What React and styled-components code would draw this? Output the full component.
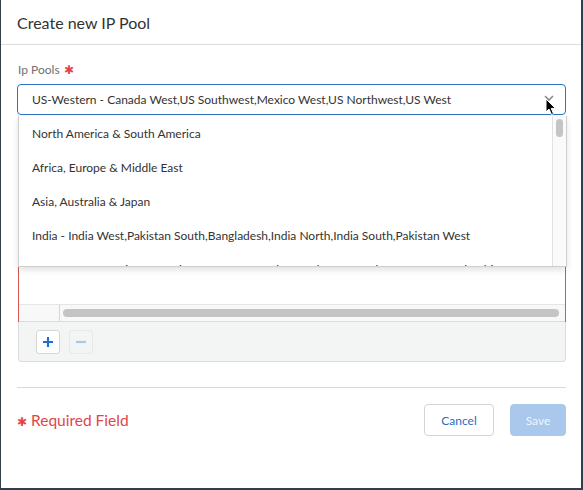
import React from 'react';
import styled, { createGlobalStyle } from 'styled-components';

const GlobalStyle = createGlobalStyle`
  html, body {
    margin: 0;
    padding: 0;
    background: #2f3f4b;
    font-family: Lato, "Open Sans", sans-serif;
  }
`;

const pools = [
  'North America & South America',
  'Africa, Europe & Middle East',
  'Asia, Australia & Japan',
  'India - India West,Pakistan South,Bangladesh,India North,India South,Pakistan West',
  'US-Eastern - Mexico Central,Panama,Guatemala,Ecuador,US Northeast,US East,Colombia,US',
];

const Modal = styled.div`
  width: 580px;
  height: 488px;
  margin-left: 1px;
  background: #fff;
  display: flex;
  flex-direction: column;
  box-sizing: border-box;
`;

const Header = styled.div`
  height: 45px;
  flex: none;
  border-bottom: 1px solid #dcdcdc;
  display: flex;
  align-items: center;
  padding-left: 16px;
  box-sizing: border-box;
  font-size: 16px;
  color: #333;
`;

const Body = styled.div`
  padding: 17px 15px 0 16px;
  position: relative;
`;

const Label = styled.div`
  font-size: 12px;
  line-height: 16px;
  color: #707070;
  padding-left: 1px;
  margin-bottom: 6px;
`;

const Star = styled.span`
  color: #e0454a;
  margin-left: 4px;
`;

const SelectBox = styled.div`
  position: relative;
  height: 31px;
  border: 1px solid #2d72c4;
  border-radius: 4px;
  box-sizing: border-box;
  display: flex;
  align-items: center;
  padding-left: 14px;
  font-size: 12px;
  color: #333;
`;

const Chevron = styled.svg`
  position: absolute;
  right: 11px;
  top: 10px;
`;

const Cursor = styled.svg`
  position: absolute;
  right: 8px;
  top: 13px;
`;

const Grid = styled.div`
  margin-top: 9px;
  margin-left: 1px;
  border-left: 1px solid #d9534f;
  border-right: 1px solid #d9534f;
  height: 198px;
  display: flex;
  flex-direction: column;
  justify-content: flex-end;
`;

const ScrollRow = styled.div`
  height: 16px;
  border-top: 1px solid #e6e6e6;
  border-bottom: 1px solid #dcdcdc;
  background: #f8f8f8;
  display: flex;
  align-items: center;
`;

const ScrollCorner = styled.div`
  width: 40px;
  height: 100%;
  border-right: 1px solid #d6d6d6;
  flex: none;
`;

const ScrollThumb = styled.div`
  flex: 1;
  height: 8px;
  margin: 0 6px 0 3px;
  background: #c4c4c4;
  border-radius: 4px;
`;

const Toolbar = styled.div`
  margin-left: 1px;
  height: 40px;
  background: #f3f4f4;
  border: 1px solid #dcdcdc;
  border-top: none;
  border-radius: 0 0 4px 4px;
  box-sizing: border-box;
  display: flex;
  align-items: center;
  gap: 9px;
  padding-left: 17px;
`;

const IconButton = styled.button`
  width: 24px;
  height: 24px;
  border: 1px solid ${(p) => (p.disabled ? '#e6e8ea' : '#d6d6d6')};
  border-radius: 3px;
  background: ${(p) => (p.disabled ? '#f3f4f4' : '#fff')};
  padding: 0;
  display: flex;
  align-items: center;
  justify-content: center;
`;

const Dropdown = styled.div`
  position: absolute;
  top: 71px;
  left: 17px;
  width: 549px;
  height: 151px;
  background: #fff;
  border: 1px solid #cfcfcf;
  border-top: none;
  box-shadow: 0 3px 6px rgba(0, 0, 0, 0.12);
  box-sizing: border-box;
  overflow: hidden;
  display: flex;
`;

const List = styled.div`
  flex: 1;
  overflow: hidden;
`;

const Item = styled.div`
  height: 34px;
  display: flex;
  align-items: center;
  padding-left: 13px;
  font-size: 12px;
  color: #333;
  white-space: nowrap;
`;

const VTrack = styled.div`
  width: 14px;
  flex: none;
  border-left: 1px solid #e2e2e2;
  background: #fafafa;
  padding-top: 3px;
  box-sizing: border-box;
`;

const VThumb = styled.div`
  width: 7px;
  height: 18px;
  margin-left: 3px;
  border-radius: 4px;
  background: #c4c4c4;
`;

const Divider = styled.div`
  margin: 25px 15px 0 16px;
  border-top: 1px solid #d8d8d8;
`;

const Footer = styled.div`
  display: flex;
  align-items: center;
  padding: 16px 15px 0 16px;
`;

const Required = styled.div`
  flex: 1;
  font-size: 15.5px;
  color: #e0454a;
`;

const ReqStar = styled.span`
  font-size: 12px;
  margin-right: 4px;
`;

const Button = styled.button`
  height: 32px;
  border-radius: 4px;
  font-family: Lato, "Open Sans", sans-serif;
  font-size: 12px;
  padding: 0;
  width: ${(p) => p.w}px;
  margin-left: ${(p) => p.ml || 0}px;
  border: 1px solid ${(p) => (p.primary ? '#a9c8ec' : '#d4d4d4')};
  background: ${(p) => (p.primary ? '#a9c8ec' : '#fff')};
  color: ${(p) => (p.primary ? '#eef4fb' : '#2a6dc2')};
`;

export default function App() {
  return (
    <>
      <GlobalStyle />
      <Modal>
        <Header>Create new IP Pool</Header>
        <Body>
          <Label>
            Ip Pools<Star>✱</Star>
          </Label>
          <SelectBox>
            US-Western - Canada West,US Southwest,Mexico West,US Northwest,US West
            <Chevron width="10" height="7" viewBox="0 0 10 7">
              <path d="M1 1 L5 5 L9 1" fill="none" stroke="#8a8a8a" strokeWidth="1.6" />
            </Chevron>
            <Cursor width="12" height="18" viewBox="0 0 12 18">
              <path
                d="M1 1 L1 14 L4 11 L6.5 16.5 L8.5 15.6 L6.2 10.4 L10.5 10.4 Z"
                fill="#000"
                stroke="#fff"
                strokeWidth="1"
                strokeLinejoin="round"
              />
            </Cursor>
          </SelectBox>
          <Grid>
            <ScrollRow>
              <ScrollCorner />
              <ScrollThumb />
            </ScrollRow>
          </Grid>
          <Toolbar>
            <IconButton>
              <svg width="12" height="12" viewBox="0 0 12 12">
                <path d="M6 1 V11 M1 6 H11" stroke="#1f6fd1" strokeWidth="2.2" />
              </svg>
            </IconButton>
            <IconButton disabled>
              <svg width="12" height="12" viewBox="0 0 12 12">
                <path d="M1 6 H11" stroke="#a9c8ec" strokeWidth="2.2" />
              </svg>
            </IconButton>
          </Toolbar>
          <Dropdown>
            <List>
              {pools.map((p) => (
                <Item key={p}>{p}</Item>
              ))}
            </List>
            <VTrack>
              <VThumb />
            </VTrack>
          </Dropdown>
        </Body>
        <Divider />
        <Footer>
          <Required>
            <ReqStar>✱</ReqStar>Required Field
          </Required>
          <Button w={70}>Cancel</Button>
          <Button primary w={56} ml={16}>
            Save
          </Button>
        </Footer>
      </Modal>
    </>
  );
}
